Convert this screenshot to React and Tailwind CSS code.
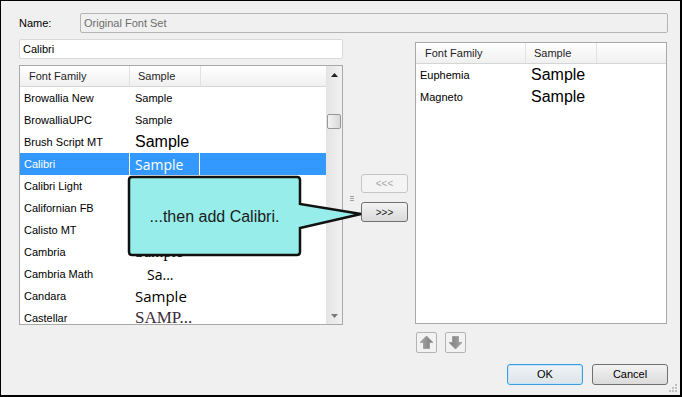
import React from 'react';

const leftRows = [
  { name: 'Browallia New', sample: 'Sample', cls: "text-[11px] font-['Liberation_Sans',Arial,sans-serif]" },
  { name: 'BrowalliaUPC', sample: 'Sample', cls: "text-[11px] font-['Liberation_Sans',Arial,sans-serif]" },
  { name: 'Brush Script MT', sample: 'Sample', cls: "text-[16px] font-['Liberation_Sans',Arial,sans-serif]" },
  { name: 'Calibri', sample: 'Sample', cls: "text-[14px] font-['Open_Sans',Arial,sans-serif]", selected: true },
  { name: 'Calibri Light', sample: 'Sample', cls: "text-[14px] font-['Open_Sans',Arial,sans-serif]" },
  { name: 'Californian FB', sample: 'Sample', cls: "text-[16px] font-['Liberation_Serif',serif]" },
  { name: 'Calisto MT', sample: 'Sample', cls: "text-[16px] font-['Liberation_Serif',serif]" },
  { name: 'Cambria', sample: 'Sample', cls: "text-[16px] font-['Liberation_Serif',serif]" },
  { name: 'Cambria Math', sample: 'Sa...', cls: "text-[14px] pl-[12px] font-['Open_Sans',Arial,sans-serif]" },
  { name: 'Candara', sample: 'Sample', cls: "text-[15px] font-['Open_Sans',Arial,sans-serif]" },
  { name: 'Castellar', sample: 'SAMP...', cls: "text-[17px] text-[#3b2b3b] font-['Liberation_Serif',serif]" },
];

const rightRows = [
  { name: 'Euphemia', sample: 'Sample' },
  { name: 'Magneto', sample: 'Sample' },
];

function Header() {
  return (
    <div className="flex h-[21px] shrink-0 border-b border-[#d5d5d5] bg-gradient-to-b from-white to-[#f0f0f0] text-[11px] text-[#1e1e1e]">
      <div className="flex w-[110px] items-center border-r border-[#e2e2e2] pl-[9px]">Font Family</div>
      <div className="flex w-[71px] items-center border-r border-[#e2e2e2] pl-[8px]">Sample</div>
      <div className="flex-1" />
    </div>
  );
}

function Row({ name, sample, cls, selected }) {
  return (
    <div className={selected ? 'flex h-[22px] shrink-0 bg-[#3399ff] text-white' : 'flex h-[22px] shrink-0 text-black'}>
      <div className={selected ? 'flex w-[110px] items-center border-r border-white pl-[4px] text-[11px]' : 'flex w-[110px] items-center pl-[4px] text-[11px]'}>
        {name}
      </div>
      <div className={selected ? 'flex w-[70px] items-center overflow-hidden whitespace-nowrap border-r border-white pl-[5px]' : 'flex w-[70px] items-center overflow-hidden whitespace-nowrap pl-[5px]'}>
        <span className={cls}>{sample}</span>
      </div>
      <div className="flex-1" />
    </div>
  );
}

function Scrollbar() {
  return (
    <div className="flex w-[16px] shrink-0 flex-col bg-gradient-to-r from-[#e4e4e4] to-[#f1f1f1]">
      <div className="flex h-[17px] items-center justify-center">
        <svg width="7" height="4" viewBox="0 0 7 4"><polygon points="3.5,0 7,4 0,4" fill="#222" /></svg>
      </div>
      <div className="mx-px mt-[31px] h-[15px] rounded-[2px] border border-[#979797] bg-gradient-to-r from-[#f3f3f3] to-[#d9d9d9]" />
      <div className="flex-1" />
      <div className="flex h-[17px] items-center justify-center">
        <svg width="7" height="4" viewBox="0 0 7 4"><polygon points="0,0 7,0 3.5,4" fill="#777" /></svg>
      </div>
    </div>
  );
}

function ArrowButton({ down }) {
  return (
    <div className="flex h-[21px] w-[21px] items-center justify-center rounded-[2px] border border-[#b4b4b4] bg-[#f2f2f2]">
      <svg width="13" height="13" viewBox="0 0 13 13" className={down ? 'rotate-180' : ''}>
        <defs>
          <linearGradient id={down ? 'ag2' : 'ag1'} x1="0" x2="1">
            <stop offset="0" stopColor="#a8a8a8" />
            <stop offset="1" stopColor="#7a7a7a" />
          </linearGradient>
        </defs>
        <polygon points="6.5,0 13,6.5 9.5,6.5 9.5,12.5 3.5,12.5 3.5,6.5 0,6.5" fill={down ? 'url(#ag2)' : 'url(#ag1)'} stroke="#8a8a8a" strokeWidth="0.6" />
      </svg>
    </div>
  );
}

export default function App() {
  return (
    <div className="relative flex h-[397px] w-[682px] flex-col border-t border-l border-r-2 border-b-2 border-black bg-[#f0f0f0] pl-[18px] pr-[12px] pt-[12px] font-['Liberation_Sans',Arial,sans-serif] text-[11px] text-black">
      <div className="flex h-[20px] items-center">
        <div className="w-[61px]">Name:</div>
        <div className="flex h-[20px] flex-1 items-center rounded-[2px] border border-[#b5b5b5] bg-[#f0f0f0] pl-[3px] text-[#6d6d6d]">
          Original Font Set
        </div>
      </div>

      <div className="mt-[6px] flex h-[315px]">
        <div className="flex w-[324px] flex-col">
          <div className="flex h-[20px] items-center rounded-[2px] border border-[#d9d9d9] bg-white pl-[3px]">Calibri</div>
          <div className="mt-[6px] flex h-[260px] border border-[#a9a9a9] bg-white">
            <div className="flex flex-1 flex-col overflow-hidden">
              <Header />
              {leftRows.map((r) => (
                <Row key={r.name} {...r} />
              ))}
            </div>
            <Scrollbar />
          </div>
        </div>

        <div className="flex w-[72px] items-start pl-[7px] pt-[135px]">
          <div className="flex items-center gap-[7px]">
            <div className="flex w-[4px] flex-col gap-px">
              <div className="h-px bg-[#a0a0a0]" />
              <div className="h-px bg-[#a0a0a0]" />
              <div className="h-px bg-[#a0a0a0]" />
            </div>
            <div className="flex flex-col gap-[9px]">
              <div className="flex h-[19px] w-[47px] items-center justify-center rounded-[3px] border border-[#c5c5c5] bg-[#f4f4f4] text-[10px] text-[#a6a6a6]">
                &lt;&lt;&lt;
              </div>
              <div className="flex h-[20px] w-[47px] items-center justify-center rounded-[3px] border border-[#707070] bg-gradient-to-b from-[#f3f3f3] to-[#dadada] text-[10px] text-[#1a1a1a]">
                &gt;&gt;&gt;
              </div>
            </div>
          </div>
        </div>

        <div className="flex w-[252px] flex-col pt-[3px]">
          <div className="flex h-[282px] flex-col border border-[#a9a9a9] bg-white">
            <Header />
            {rightRows.map((r) => (
              <Row key={r.name} name={r.name} sample={r.sample} cls="text-[16px] font-['Liberation_Sans',Arial,sans-serif]" />
            ))}
          </div>
          <div className="ml-px mt-[8px] flex gap-[8px]">
            <ArrowButton />
            <ArrowButton down />
          </div>
        </div>
      </div>

      <div className="mt-[10px] flex justify-end gap-[9px]">
        <div className="flex h-[21px] w-[76px] items-center justify-center rounded-[3px] border border-[#3c9ee0] bg-gradient-to-b from-[#f0f4f7] to-[#dde3e8] text-[11px] shadow-[inset_0_0_0_1px_#c4e6fa]">
          OK
        </div>
        <div className="flex h-[21px] w-[76px] items-center justify-center rounded-[3px] border border-[#707070] bg-gradient-to-b from-[#f3f3f3] to-[#dbdbdb] text-[11px]">
          Cancel
        </div>
      </div>

      <svg className="absolute bottom-[2px] right-[2px]" width="10" height="10" viewBox="0 0 10 10">
        <rect x="7" y="1" width="2" height="2" fill="#c0c0c0" />
        <rect x="4" y="4" width="2" height="2" fill="#c0c0c0" />
        <rect x="7" y="4" width="2" height="2" fill="#c0c0c0" />
        <rect x="1" y="7" width="2" height="2" fill="#c0c0c0" />
        <rect x="4" y="7" width="2" height="2" fill="#c0c0c0" />
        <rect x="7" y="7" width="2" height="2" fill="#c0c0c0" />
      </svg>

      <div className="absolute left-[125px] top-[173px] h-[83px] w-[238px]">
        <svg className="absolute inset-0" width="238" height="83" viewBox="0 0 238 83">
          <path
            d="M6,3 H171 Q174,3 174,6 V30 L235,40 L174,54 V78 Q174,81 171,81 H6 Q3,81 3,78 V6 Q3,3 6,3 Z"
            fill="#96ede9"
            stroke="#111"
            strokeWidth="2.5"
            strokeLinejoin="miter"
          />
        </svg>
        <div className="absolute left-[3px] top-[4px] flex h-[78px] w-[171px] items-center justify-center text-[16px] text-[#1c1c1c]">
          ...then add Calibri.
        </div>
      </div>
    </div>
  );
}
